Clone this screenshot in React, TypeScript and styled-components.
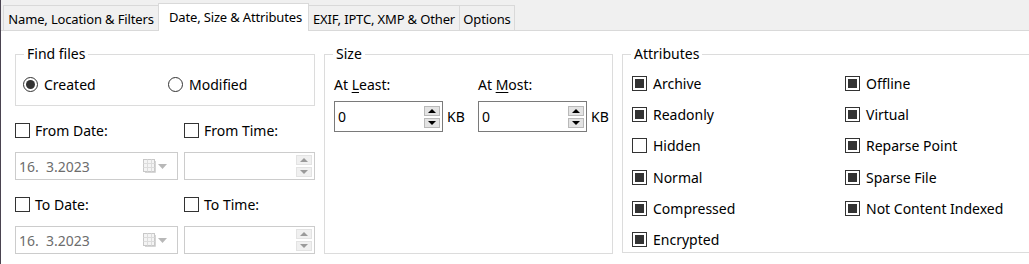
import React from "react";
import styled, { createGlobalStyle, css } from "styled-components";

const GlobalStyle = createGlobalStyle`
  html, body {
    margin: 0;
    padding: 0;
    background: #ffffff;
  }
`;

const Root = styled.div`
  width: 1029px;
  height: 264px;
  overflow: hidden;
  box-sizing: border-box;
  border-left: 1px solid #4a4350;
  background: #ffffff;
  font-family: "Noto Sans", "Open Sans", sans-serif;
  font-size: 14px;
  color: #000000;
`;

const TabStrip = styled.div`
  display: flex;
  align-items: flex-end;
  height: 31px;
  box-sizing: border-box;
  padding-left: 2px;
  background: #f0f0f0;
  border-bottom: 1px solid #d9d9d9;
`;

const Tab = styled.div<{ $active?: boolean; $width: number }>`
  display: flex;
  align-items: center;
  justify-content: center;
  box-sizing: border-box;
  width: ${(p) => p.$width}px;
  height: 25px;
  padding-top: 2px;
  margin-right: -1px;
  border: 1px solid #d9d9d9;
  border-bottom: none;
  background: #f0f0f0;
  font-size: 13px;
  letter-spacing: -0.15px;
  white-space: nowrap;
  ${(p) =>
    p.$active &&
    css`
      position: relative;
      z-index: 1;
      height: 28px;
      margin-bottom: -1px;
      padding: 0 0 2px 4px;
      background: #ffffff;
    `}
`;

const Body = styled.div`
  display: flex;
  padding: 13px 0 0 14px;
  gap: 9px;
`;

const LeftColumn = styled.div`
  display: flex;
  flex-direction: column;
  width: 300px;
  flex: none;
`;

const Group = styled.fieldset<{ $width: number; $height: number }>`
  margin: 0;
  padding: 0;
  width: ${(p) => p.$width}px;
  height: ${(p) => p.$height}px;
  box-sizing: border-box;
  flex: none;
  border: 1px solid #dcdcdc;
  min-width: 0;
`;

const Legend = styled.legend`
  margin-left: 8px;
  padding: 0 3px;
  line-height: 20px;
`;

const RadioRow = styled.div`
  display: flex;
  padding: 10px 0 0 7px;
  height: 20px;
`;

const Option = styled.label<{ $width?: number }>`
  display: flex;
  align-items: center;
  gap: 6px;
  width: ${(p) => (p.$width ? `${p.$width}px` : "auto")};
  height: 20px;
  white-space: nowrap;
`;

const Radio = styled.span<{ $checked?: boolean }>`
  width: 15px;
  height: 15px;
  box-sizing: border-box;
  border: 1px solid #333333;
  border-radius: 50%;
  display: flex;
  align-items: center;
  justify-content: center;
  flex: none;
  &::after {
    content: "";
    width: 9px;
    height: 9px;
    border-radius: 50%;
    background: ${(p) => (p.$checked ? "#333333" : "transparent")};
  }
`;

const Check = styled.span<{ $checked?: boolean }>`
  width: 15px;
  height: 15px;
  box-sizing: border-box;
  border: 1px solid #333333;
  background: #ffffff;
  display: flex;
  align-items: center;
  justify-content: center;
  flex: none;
  &::after {
    content: "";
    width: 9px;
    height: 9px;
    background: ${(p) => (p.$checked ? "#333333" : "transparent")};
  }
`;

const FieldGrid = styled.div`
  display: grid;
  grid-template-columns: 163px 131px;
  column-gap: 6px;
  margin-top: 15px;
`;

const CheckCell = styled(Option)`
  height: 18px;
  margin-bottom: 13px;
  gap: 5px;
`;

const FieldBox = styled.div<{ $disabled?: boolean; $width: number; $height: number; $gap?: number }>`
  display: flex;
  align-items: center;
  width: ${(p) => p.$width}px;
  height: ${(p) => p.$height}px;
  box-sizing: border-box;
  border: 1px solid ${(p) => (p.$disabled ? "#cccccc" : "#7a7a7a")};
  padding: 0 2px 0 3px;
  color: ${(p) => (p.$disabled ? "#6d6d6d" : "#000000")};
  background: #ffffff;
  margin-bottom: ${(p) => p.$gap ?? 0}px;
`;

const FieldText = styled.span`
  flex: 1;
  white-space: pre;
`;

const Spinner = styled.div`
  display: flex;
  flex-direction: column;
  gap: 2px;
  flex: none;
`;

const SpinButton = styled.div<{ $disabled?: boolean }>`
  width: 16px;
  height: 10px;
  box-sizing: border-box;
  border: 1px solid ${(p) => (p.$disabled ? "#e3e3e3" : "#b9b9b9")};
  background: ${(p) => (p.$disabled ? "#f0f0f0" : "#e3e3e3")};
  display: flex;
  align-items: center;
  justify-content: center;
`;

const DateIcons = styled.div`
  display: flex;
  align-items: center;
  gap: 2px;
  margin-right: 8px;
`;

const SizeGroup = styled.div`
  display: grid;
  grid-template-columns: 144px 140px;
  padding: 11px 0 0 9px;
`;

const SizeCell = styled.div`
  display: flex;
  flex-direction: column;
`;

const SizeLabel = styled.div`
  height: 20px;
  line-height: 20px;
  margin-bottom: 6px;
`;

const SpinRow = styled.div`
  display: flex;
  align-items: center;
  gap: 4px;
`;

const Key = styled.span`
  text-decoration: underline;
  text-underline-offset: 2px;
`;

const AttrGrid = styled.div`
  display: grid;
  grid-template-columns: 213px 200px;
  grid-auto-flow: column;
  grid-template-rows: repeat(6, 31.2px);
  padding: 4px 0 0 9px;
`;

const AttrItem = styled(Option)`
  height: 31px;
`;

const Arrow = ({ up, color }: { up?: boolean; color: string }) => (
  <svg width="8" height="4" viewBox="0 0 8 4">
    <path d={up ? "M0 4 L4 0 L8 4 Z" : "M0 0 L4 4 L8 0 Z"} fill={color} />
  </svg>
);

const SpinButtons = ({ disabled }: { disabled?: boolean }) => (
  <Spinner>
    <SpinButton $disabled={disabled}>
      <Arrow up color={disabled ? "#9a9a9a" : "#000"} />
    </SpinButton>
    <SpinButton $disabled={disabled}>
      <Arrow color={disabled ? "#9a9a9a" : "#000"} />
    </SpinButton>
  </Spinner>
);

const CalendarIcon = () => (
  <svg width="13" height="14" viewBox="0 0 13 14">
    <rect x="0.5" y="0.5" width="11" height="12" fill="#f4f4f4" stroke="#c8c8c8" />
    <path
      d="M0.5 4.5 H11.5 M0.5 8.5 H11.5 M4.5 0.5 V12.5 M8.5 0.5 V12.5"
      stroke="#dcdcdc"
    />
    <path d="M12.5 2 V13.5 H2" stroke="#d6d6d6" fill="none" />
  </svg>
);

const DropArrow = () => (
  <svg width="9" height="5" viewBox="0 0 9 5">
    <path d="M0 0 L4.5 5 L9 0 Z" fill="#b8b8b8" />
  </svg>
);

const DateField = () => (
  <FieldBox $disabled $width={163} $height={28} $gap={15}>
    <FieldText>16.  3.2023</FieldText>
    <DateIcons>
      <CalendarIcon />
      <DropArrow />
    </DateIcons>
  </FieldBox>
);

const TimeField = () => (
  <FieldBox $disabled $width={131} $height={28} $gap={15}>
    <FieldText />
    <SpinButtons disabled />
  </FieldBox>
);

const SizeSpin = () => (
  <SpinRow>
    <FieldBox $width={109} $height={31}>
      <FieldText>0</FieldText>
      <SpinButtons />
    </FieldBox>
    <span>KB</span>
  </SpinRow>
);

const attributes: [string, boolean][] = [
  ["Archive", true],
  ["Readonly", true],
  ["Hidden", false],
  ["Normal", true],
  ["Compressed", true],
  ["Encrypted", true],
  ["Offline", true],
  ["Virtual", true],
  ["Reparse Point", true],
  ["Sparse File", true],
  ["Not Content Indexed", true],
];

export default function App() {
  return (
    <Root>
      <GlobalStyle />
      <TabStrip>
        <Tab $width={156}>Name, Location &amp; Filters</Tab>
        <Tab $width={151} $active>
          Date, Size &amp; Attributes
        </Tab>
        <Tab $width={152}>EXIF, IPTC, XMP &amp; Other</Tab>
        <Tab $width={56}>Options</Tab>
      </TabStrip>
      <Body>
        <LeftColumn>
          <Group $width={300} $height={62}>
            <Legend>Find files</Legend>
            <RadioRow>
              <Option $width={145}>
                <Radio $checked />
                Created
              </Option>
              <Option>
                <Radio />
                Modified
              </Option>
            </RadioRow>
          </Group>
          <FieldGrid>
            <CheckCell>
              <Check />
              From Date:
            </CheckCell>
            <CheckCell>
              <Check />
              From Time:
            </CheckCell>
            <DateField />
            <TimeField />
            <CheckCell>
              <Check />
              To Date:
            </CheckCell>
            <CheckCell>
              <Check />
              To Time:
            </CheckCell>
            <DateField />
            <TimeField />
          </FieldGrid>
        </LeftColumn>
        <Group $width={289} $height={210}>
          <Legend>Size</Legend>
          <SizeGroup>
            <SizeCell>
              <SizeLabel>
                At <Key>L</Key>east:
              </SizeLabel>
              <SizeSpin />
            </SizeCell>
            <SizeCell>
              <SizeLabel>
                At <Key>M</Key>ost:
              </SizeLabel>
              <SizeSpin />
            </SizeCell>
          </SizeGroup>
        </Group>
        <Group $width={420} $height={209}>
          <Legend>Attributes</Legend>
          <AttrGrid>
            {attributes.map(([name, on]) => (
              <AttrItem key={name}>
                <Check $checked={on} />
                {name}
              </AttrItem>
            ))}
          </AttrGrid>
        </Group>
      </Body>
    </Root>
  );
}
